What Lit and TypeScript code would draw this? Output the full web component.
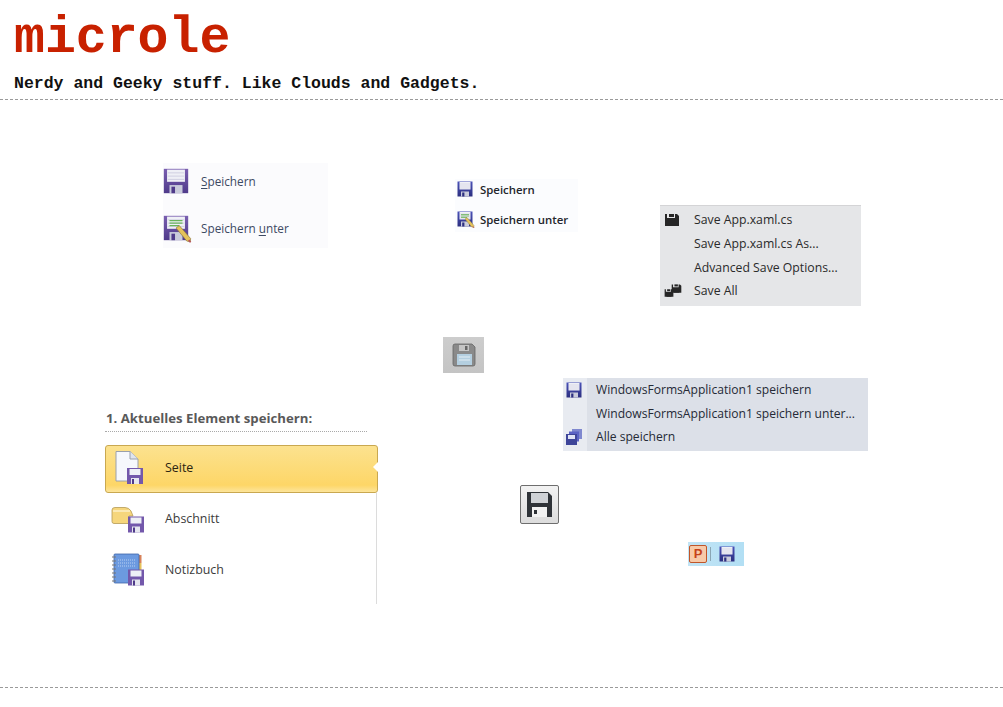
import { LitElement, html, css, svg } from "lit";
import { customElement } from "lit/decorators.js";

const floppy = (size: number, body = "#7a5fb0", dark = "#4f3a8a", extra: unknown = "") => html`
  <svg width=${size} height=${size} viewBox="0 0 16 16">
    <defs><linearGradient id="fg${body.slice(1)}" x1="0" y1="0" x2="0" y2="1"><stop offset="0" stop-color=${body}></stop><stop offset="1" stop-color=${dark}></stop></linearGradient></defs>
    <path d="M.5 .5H15.5V15.5H.5Z" fill="url(#fg${body.slice(1)})"></path>
    <rect x="2.5" y="1" width="11" height="7.5" fill="#eff0f6"></rect>
    <path d="M3 3H13M3 5H13M3 7H13" stroke="#cfcfe0" stroke-width=".6"></path>
    <rect x="4" y="10.5" width="8" height="5" fill="#c9cbdb"></rect>
    <rect x="5.2" y="11.5" width="2.2" height="4" fill=${dark}></rect>
    ${extra}
  </svg>`;

const pencil = svg`
  <path d="M4 3.5H12M4 5H12M4 6.5H10" stroke="#69b45a" stroke-width=".8"></path>
  <path d="M8 8L10 6.5L17 14.5L16.8 16.6L14.6 16Z" fill="#e4c25a" stroke="#8a7440" stroke-width=".4"></path>
  <path d="M15.8 15.4L17 16.8" stroke="#b9505a" stroke-width="1"></path>`;

const mono = (size: number, x = 0, y = 0) => svg`
  <g transform="translate(${x} ${y}) scale(${size / 16})">
    <path d="M1 2H3V6H11V2H13L15 4V14H1Z" fill="#262626"></path>
    <rect x="5" y="2" width="5" height="3" fill="#262626"></rect>
    <rect x="4" y="9" width="8" height="5" fill="#262626"></rect>
  </g>`;

const badge = (x: number, y: number) => svg`
  <g transform="translate(${x} ${y})">
    <path d="M0 0H16V16H0Z" fill="#7358ab"></path>
    <rect x="2.5" y="1" width="11" height="6" fill="#eef0f6"></rect>
    <rect x="4" y="10" width="8" height="6" fill="#e5e6ef"></rect>
    <rect x="5" y="11" width="2" height="5" fill="#4f3a8a"></rect>
  </g>`;

@customElement("app-root")
export class AppRoot extends LitElement {
  static styles = css`
    :host { display: block; width: 1003px; height: 707px; background: #fff; overflow: hidden;
      font-family: "Open Sans", "Noto Sans", sans-serif; }
    header { height: 100px; box-sizing: border-box; padding: 0 14px; border-bottom: 1px dashed #9a9a9a;
      font-family: "Liberation Mono", monospace; font-weight: 700; }
    h1 { margin: 0; height: 73px; font-size: 51.5px; line-height: 76px; color: #c82100; }
    p { margin: 0; padding-top: 1px; font-size: 16.5px; line-height: 20px; color: #111; }
    .canvas { position: relative; height: 588px; box-sizing: border-box; border-bottom: 1px dashed #9a9a9a; }
    .piece { position: absolute; box-sizing: border-box; }
    svg { display: block; flex: none; overflow: visible; }
    u { text-underline-offset: 2px; }

    .a { left: 163px; top: 63px; width: 165px; height: 85px; background: #fbfbfd; color: #3d4a63;
      font-size: 11.75px; display: flex; flex-direction: column; gap: 21px; padding-top: 5px; }
    .a div { display: flex; align-items: center; gap: 12px; height: 26px; }

    .b { left: 455px; top: 79px; width: 123px; height: 53px; background: #fbfcfe; color: #24262c;
      font-size: 11.4px; font-weight: 600; display: flex; flex-direction: column; gap: 14px; padding: 2px 0 0 2px; }
    .b div { display: flex; align-items: center; gap: 7px; height: 16px; }

    .c { left: 660px; top: 105px; width: 201px; height: 101px; background: #e5e6e8; color: #2a2a2a;
      font-size: 12.25px; padding-top: 2px; display: grid; grid-auto-rows: 23.7px; border-top: 1px solid #d4d4d6; }
    .c div { display: grid; grid-template-columns: 34px 1fr; align-items: center; }
    .c span { grid-column: 2; }
    .c svg { margin-left: 4px; }

    .d { left: 443px; top: 237px; width: 41px; height: 36px; background: linear-gradient(#cdcdcd, #c4c4c4);
      display: flex; align-items: center; justify-content: center; }

    .e { left: 563px; top: 278px; width: 305px; height: 73px; background: #dce0e8; color: #252a36;
      font-size: 12.1px; display: grid; grid-auto-rows: 23.5px; }
    .e::before { content: ""; position: absolute; inset: 0 auto 0 0; width: 24px; background: #e8ebf1; }
    .e div { position: relative; display: grid; grid-template-columns: 33px 1fr; align-items: center; }
    .e span { grid-column: 2; white-space: nowrap; }
    .e svg { margin-left: 3px; }

    .f { left: 105px; top: 307px; width: 273px; height: 197px; color: #3b3b3b; font-size: 12.4px; }
    .f h2 { margin: 0; padding-left: 1px; font-size: 13.2px; line-height: 22px; font-weight: 700; color: #595959; white-space: nowrap; }
    .f .dots { width: 262px; border-bottom: 1px dotted #a9a9a9; margin-top: 2px; height: 0; }
    .sel { margin-top: 13px; height: 48px; box-sizing: border-box; border: 1px solid #c9a850; border-radius: 3px;
      background: linear-gradient(#fce28f, #fdd667 85%, #fde59b); position: relative; }
    .sel::after { content: ""; position: absolute; right: -1px; top: 16px; border: 5px solid transparent;
      border-right-color: #fff; border-left-width: 0; }
    .rows { width: 272px; border-right: 1px solid #dcdcdc; height: 111px; box-sizing: border-box; }
    .row { display: flex; align-items: center; padding-left: 6px; gap: 20px; height: 51px; box-sizing: border-box; }
    .sel.row { height: 48px; padding-left: 9px; gap: 16px; color: #2b2410; }
    .sel span { padding-bottom: 3px; }

    .g { left: 520px; top: 385px; width: 39px; height: 39px; border: 1px solid #6e6e6e; border-radius: 2px;
      background: linear-gradient(#f2f2f2, #dcdcdc); display: flex; align-items: center; justify-content: center; }

    .h { left: 688px; top: 442px; width: 56px; height: 24px; background: linear-gradient(90deg, #c2e4f5, #b2dff4);
      display: flex; align-items: center; gap: 3px; padding-left: 1px; }
    .pp { width: 16px; height: 16px; border: 1px solid #c0562a; border-radius: 2px; background: #f7c9a8; color: #c6421a;
      font: 700 13px/16px "Liberation Sans", sans-serif; text-align: center; }
    .sep { width: 1px; height: 14px; background: #8aa6b4; margin-right: 5px; }
  `;

  render() {
    return html`
      <header>
        <h1>microle</h1>
        <p>Nerdy and Geeky stuff. Like Clouds and Gadgets.</p>
      </header>
      <div class="canvas">
        <div class="piece a">
          <div>${floppy(26)}<span><u>S</u>peichern</span></div>
          <div>${floppy(26, "#7a5fb0", "#4f3a8a", pencil)}<span>Speichern <u>u</u>nter</span></div>
        </div>
        <div class="piece b">
          <div>${floppy(16, "#4a52b8", "#2c2f80")}<span>Speichern</span></div>
          <div>${floppy(16, "#4a52b8", "#2c2f80", pencil)}<span>Speichern unter</span></div>
        </div>
        <div class="piece c">
          <div><svg width="16" height="16">${mono(16)}</svg><span>Save App.xaml.cs</span></div>
          <div><span>Save App.xaml.cs As...</span></div>
          <div><span>Advanced Save Options...</span></div>
          <div><svg width="18" height="16">${mono(10, 0, 5)}${mono(11, 7, 0)}</svg><span>Save All</span></div>
        </div>
        <div class="piece d">
          <svg width="24" height="24" viewBox="0 0 24 24">
            <path d="M1 3Q1 1 3 1H20L23 4V21Q23 23 21 23H3Q1 23 1 21Z" fill="#8a8a8a" stroke="#666" stroke-width=".8"></path>
            <rect x="7" y="2" width="10" height="6" fill="#c5c5c5"></rect>
            <rect x="13" y="3" width="2.5" height="4" fill="#666"></rect>
            <rect x="5" y="11" width="15" height="11" fill="#b4cfe0"></rect>
            <path d="M7 14H18M7 17H18" stroke="#e4eef4"></path>
          </svg>
        </div>
        <div class="piece e">
          <div>${floppy(16, "#4a52b8", "#2c2f80")}<span>WindowsFormsApplication1 speichern</span></div>
          <div><span>WindowsFormsApplication1 speichern unter...</span></div>
          <div>
            <svg width="16" height="16" viewBox="0 0 16 16">
              <rect x="6" y="0" width="10" height="10" fill="#7f88cf"></rect>
              <rect x="3" y="2.5" width="10" height="10" fill="#5a62c4"></rect>
              <rect x="0" y="5" width="11" height="11" fill="#3e4599"></rect>
              <rect x="2" y="6" width="7" height="4" fill="#dfe3f5"></rect>
            </svg>
            <span>Alle speichern</span>
          </div>
        </div>
        <div class="piece f">
          <h2>1. Aktuelles Element speichern:</h2>
          <div class="dots"></div>
          <div class="sel row">
            <svg width="34" height="36" viewBox="0 0 34 36">
              <path d="M1 .5H15L23 8V30H1Z" fill="#f6f8fc" stroke="#9aa0ac"></path>
              <path d="M15 .5V8H23" fill="#dfe4ee" stroke="#9aa0ac"></path>
              ${badge(12, 17)}
            </svg>
            <span>Seite</span>
          </div>
          <div class="rows">
            <div class="row">
              <svg width="34" height="34" viewBox="0 0 34 34">
                <path d="M1 8Q1 5.5 4 5.5H14Q18 5.5 20 9L22 14H18V21.5H3Q1 21.5 1 19.5Z" fill="#f6d67c" stroke="#b59a55" stroke-width=".8"></path>
                <path d="M2 9H19" stroke="#fbe9b4" stroke-width="2"></path>
                ${badge(17, 14.5)}
              </svg>
              <span>Abschnitt</span>
            </div>
            <div class="row">
              <svg width="34" height="34" viewBox="0 0 34 34">
                <rect x="27" y="2" width="3.5" height="8" fill="#d8825a"></rect>
                <rect x="27" y="10" width="3.5" height="8" fill="#e7c25a"></rect>
                <rect x="3" y="1" width="25" height="29" rx="1" fill="#6c9ae0" stroke="#3f66a8" stroke-width=".8"></rect>
                <path d="M7 7H24M7 10H24M7 13H24" stroke="#b8d0f2" stroke-dasharray="1 1"></path>
                <path d="M1 4H5M1 8H5M1 12H5M1 16H5M1 20H5M1 24H5M1 28H5" stroke="#777"></path>
                ${badge(17, 16.5)}
              </svg>
              <span>Notizbuch</span>
            </div>
          </div>
        </div>
        <div class="piece g">
          <svg width="25" height="25" viewBox="0 0 25 25">
            <path d="M0 0H21L25 4V25H0Z" fill="#2f3338"></path>
            <rect x="4" y="1" width="17" height="10" fill="#cfd2d6"></rect>
            <rect x="5" y="15" width="15" height="10" fill="#f2f2f2"></rect>
            <rect x="7" y="18" width="3" height="4" fill="#2f3338"></rect>
          </svg>
        </div>
        <div class="piece h">
          <div class="pp">P</div>
          <div class="sep"></div>
          ${floppy(16, "#4a52b8", "#2c2f80")}
        </div>
      </div>
    `;
  }
}
